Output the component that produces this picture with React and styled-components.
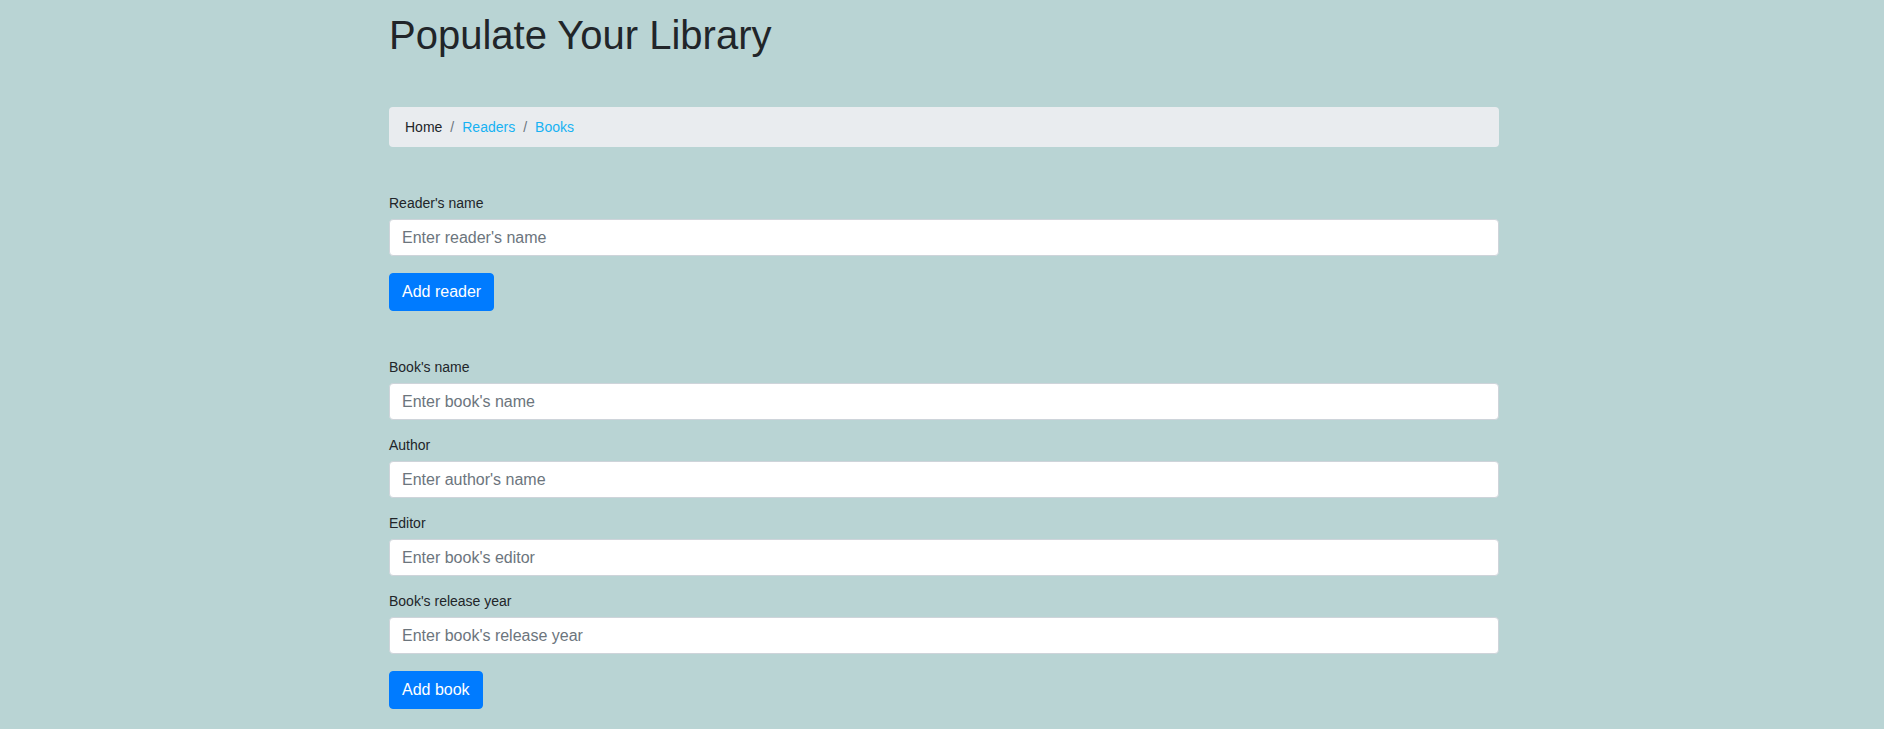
import React from "react";
import styled, { createGlobalStyle } from "styled-components";

const GlobalStyle = createGlobalStyle`
  body {
    margin: 0;
    background: #b9d4d4;
    font-family: "Liberation Sans", Arial, sans-serif;
    color: #212529;
  }
`;

export default function App() {
  return (
    <>
      <GlobalStyle />
      <Container>
        <Title>Populate Your Library</Title>

        <Breadcrumb>
          <Crumb>Home</Crumb>
          <Crumb link>Readers</Crumb>
          <Crumb link>Books</Crumb>
        </Breadcrumb>

        <Section>
          <Group>
            <Label>Reader's name</Label>
            <Input placeholder="Enter reader's name" />
          </Group>
          <Button>Add reader</Button>
        </Section>

        <Section>
          <Group>
            <Label>Book's name</Label>
            <Input placeholder="Enter book's name" />
          </Group>
          <Group>
            <Label>Author</Label>
            <Input placeholder="Enter author's name" />
          </Group>
          <Group>
            <Label>Editor</Label>
            <Input placeholder="Enter book's editor" />
          </Group>
          <Group>
            <Label>Book's release year</Label>
            <Input placeholder="Enter book's release year" />
          </Group>
          <Button>Add book</Button>
        </Section>
      </Container>
    </>
  );
}

const Container = styled.div`
  width: 1110px;
  margin-left: calc(50% - 553px);
  padding-top: 11px;
  padding-bottom: 20px;
`;

const Title = styled.h1`
  margin: 0 0 48px 0;
  font-size: 40px;
  line-height: 48px;
  font-weight: 400;
  color: #212529;
`;

const Breadcrumb = styled.div`
  display: flex;
  align-items: center;
  height: 40px;
  box-sizing: border-box;
  padding: 0 16px;
  background: #e9ecef;
  border-radius: 4px;
  font-size: 14px;
  line-height: 20px;
`;

const Crumb = styled.span`
  color: ${(p) => (p.link ? "#17b2f3" : "#212529")};

  &:not(:first-child)::before {
    content: "/";
    color: #6c757d;
    padding: 0 8px;
  }
`;

const Section = styled.div`
  display: flex;
  flex-direction: column;
  align-items: flex-start;
  margin-top: 46px;
`;

const Group = styled.div`
  display: flex;
  flex-direction: column;
  width: 100%;
  margin-bottom: 15px;
`;

const Label = styled.label`
  font-size: 14px;
  line-height: 20px;
  margin-bottom: 6px;
  color: #212529;
`;

const Input = styled.input`
  box-sizing: border-box;
  width: 100%;
  height: 37px;
  padding: 0 12px;
  border: 1px solid #ced4da;
  border-radius: 4px;
  background: #fff;
  font-family: "Liberation Sans", Arial, sans-serif;
  font-size: 16px;
  color: #495057;
  outline: none;

  &::placeholder {
    color: #6c757d;
  }
`;

const Button = styled.button`
  margin-top: 2px;
  height: 38px;
  padding: 0 12px;
  border: 1px solid #007bff;
  border-radius: 4px;
  background: #007bff;
  color: #fff;
  font-family: "Liberation Sans", Arial, sans-serif;
  font-size: 16px;
  line-height: 24px;
  cursor: pointer;
`;
